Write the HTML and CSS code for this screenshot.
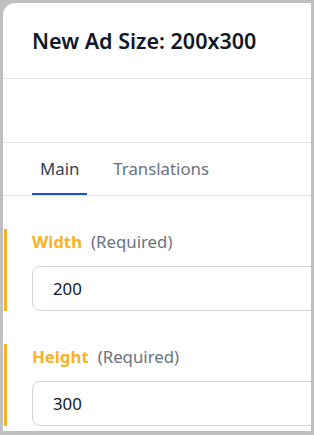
FILE: index.html
```html
<!DOCTYPE html>
<html>
<head>
<meta charset="utf-8">
<link rel="stylesheet" href="styles.css">
</head>
<body>
<div class="panel">
  <div class="header"><h1 class="title">New Ad Size: 200x300</h1></div>
  <div class="spacer"></div>
  <div class="tabs">
    <div class="tab active">Main</div>
    <div class="tab">Translations</div>
  </div>
  <div class="fields">
    <div class="field">
      <div class="label"><span class="name">Width</span><span class="req">(Required)</span></div>
      <div class="input">200</div>
    </div>
    <div class="field">
      <div class="label"><span class="name">Height</span><span class="req">(Required)</span></div>
      <div class="input">300</div>
    </div>
  </div>
</div>
</body>
</html>
```
FILE: styles.css
```css
html, body { margin: 0; padding: 0; }
body {
  background: #bfbfbf;
  width: 314px;
  height: 435px;
  padding: 3px 3px 0 3px;
  box-sizing: border-box;
  overflow: hidden;
  font-family: "Noto Sans", "Open Sans", sans-serif;
}
.panel {
  background: #fff;
  border-top-left-radius: 12px;
  height: 428px;
  overflow: hidden;
}
.header {
  height: 75px;
  border-bottom: 1px solid #e5e7eb;
  display: flex;
  align-items: center;
  padding-left: 29px;
}
.title {
  margin: 0;
  font-size: 21.5px;
  font-weight: 600;
  color: #111827;
  white-space: nowrap;
}
.spacer {
  height: 63px;
  border-bottom: 1px solid #e5e7eb;
}
.tabs {
  display: flex;
  padding-left: 29px;
  border-bottom: 1px solid #e5e7eb;
}
.tab {
  font-size: 16.8px;
  line-height: 23px;
  color: #6b7280;
  padding: 14px 8px 13px;
  margin-right: 18px;
  border-bottom: 2px solid transparent;
}
.tab.active {
  color: #374151;
  border-bottom-color: #1d4ed8;
}
.fields {
  padding-top: 33px;
  display: flex;
  flex-direction: column;
  gap: 33px;
}
.field {
  margin-left: 1px;
  border-left: 3px solid #fbb124;
  padding-left: 25px;
}
.label {
  font-size: 16.8px;
  height: 26px;
  line-height: 26px;
  margin-bottom: 11px;
  white-space: nowrap;
}
.name { color: #fbb124; font-weight: 700; margin-right: 9px; }
.req { color: #6b7280; }
.input {
  width: 300px;
  height: 45px;
  border: 1px solid #d1d5db;
  border-radius: 8px;
  box-sizing: border-box;
  display: flex;
  align-items: center;
  padding-left: 20px;
  font-size: 16.8px;
  color: #111827;
}
```
